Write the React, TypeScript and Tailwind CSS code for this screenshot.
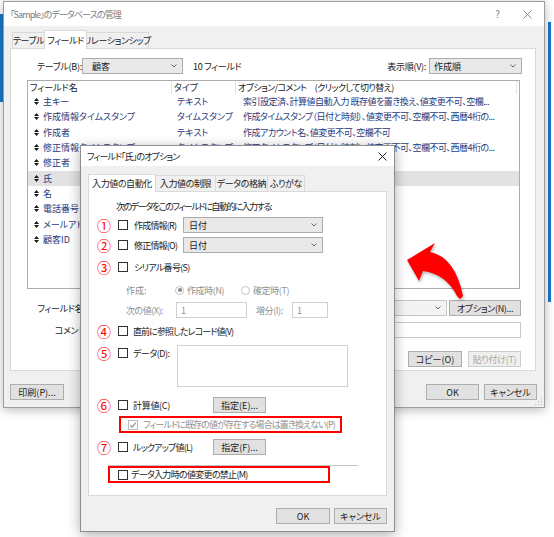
import React from 'react';

type WithClass = { className?: string; children?: React.ReactNode };

const Chevron = () => (
  <svg width="6" height="4" viewBox="0 0 6 4" className="shrink-0">
    <path d="M0.5 0.5 L3 3 L5.5 0.5" fill="none" stroke="#6a6a6a" strokeWidth="1" />
  </svg>
);

const CloseGlyph = ({ color }: { color: string }) => (
  <svg width="9" height="9" viewBox="0 0 9 9" className="shrink-0">
    <path d="M0.5 0.5 L8.5 8.5 M8.5 0.5 L0.5 8.5" stroke={color} strokeWidth="1" />
  </svg>
);

const Btn = ({ className = '', children, disabled }: WithClass & { disabled?: boolean }) => (
  <div
    className={`flex h-[16px] shrink-0 items-center justify-center border ${
      disabled ? 'border-[#cccccc] bg-[#efefef] text-[#a6a6a6]' : 'border-[#adadad] bg-[#e1e1e1] text-[#1a1a1a]'
    } ${className}`}
  >
    {children}
  </div>
);

const Select = ({ className = '', children }: WithClass) => (
  <div
    className={`flex h-[16px] shrink-0 items-center justify-between border border-[#adadad] bg-[#e9e9e9] pr-[5px] ${className}`}
  >
    <span>{children}</span>
    <Chevron />
  </div>
);

const Check = ({ checked, disabled }: { checked?: boolean; disabled?: boolean }) => (
  <span
    className={`relative block h-[10px] w-[10px] shrink-0 border bg-white ${
      disabled ? 'border-[#bcbcbc]' : 'border-[#333333]'
    }`}
  >
    {checked && (
      <svg width="8" height="8" viewBox="0 0 8 8" className="absolute left-0 top-0">
        <path d="M1.2 4.2 L3.2 6.2 L6.8 1.6" fill="none" stroke="#9a9a9a" strokeWidth="1.3" />
      </svg>
    )}
  </span>
);

const Radio = ({ on }: { on?: boolean }) => (
  <span className="flex h-[9px] w-[9px] shrink-0 items-center justify-center rounded-full border border-[#c4c4c4] bg-white">
    {on && <span className="block h-[4px] w-[4px] rounded-full bg-[#8a8a8a]" />}
  </span>
);

const Num = ({ children }: WithClass) => (
  <span className="flex w-[14px] shrink-0 justify-center text-[14px] leading-none text-[#ff0000]">{children}</span>
);

const Grabber = () => (
  <svg width="5" height="7" viewBox="0 0 5 7" className="shrink-0">
    <path d="M2.5 0 L5 3 L0 3 Z M2.5 7 L5 4 L0 4 Z" fill="#1a1a1a" />
  </svg>
);

// name, type, options/comment (the lower rows sit under the options window)
const fields: [string, string, string][] = [
  ['主キー', 'テキスト', '索引設定済、計算値自動入力 既存値を置き換え、値変更不可、空欄...'],
  ['作成情報タイムスタンプ', 'タイムスタンプ', '作成タイムスタンプ（日付と時刻）、値変更不可、空欄不可、西暦4桁の...'],
  ['作成者', 'テキスト', '作成アカウント名、値変更不可、空欄不可'],
  ['修正情報タイムスタンプ', 'タイムスタンプ', '修正タイムスタンプ（日付と時刻）、値変更不可、空欄不可、西暦4桁の...'],
  ['修正者', '', ''],
  ['氏', '', ''],
  ['名', '', ''],
  ['電話番号', '', ''],
  ['メールアドレス', '', ''],
  ['顧客ID', '', ''],
];

const tabOff =
  '-ml-px flex h-[16px] items-center justify-center border border-b-0 border-[#d9d9d9] bg-[#f0f0f0] tracking-[-0.4px]';
const tabOn =
  'relative z-10 -mb-px flex items-center justify-center border border-b-0 border-[#d9d9d9] bg-white tracking-[-0.4px]';

function DatabaseDialog() {
  return (
    <div className="absolute left-[3px] top-[1px] flex h-[407px] w-[542px] flex-col border border-[#9d9d9d] bg-[#f0f0f0] shadow-[0_2px_10px_rgba(0,0,0,0.28)]">
      {/* title bar */}
      <div className="flex h-[24px] shrink-0 items-center bg-white pl-[6px] pr-[12px] text-[#7c7c7c]">
        <span className="tracking-[-0.9px]">「Sample」のデータベースの管理</span>
        <span className="ml-auto mr-[23px] text-[10px]">?</span>
        <CloseGlyph color="#8a8a8a" />
      </div>

      {/* tabs */}
      <div className="flex h-[22px] shrink-0 items-end pl-[9px]">
        <div className={`${tabOff} w-[33px]`}>テーブル</div>
        <div className={`${tabOn} -ml-px h-[19px] w-[43px]`}>フィールド</div>
        <div className={`${tabOff} w-[63px]`}>リレーションシップ</div>
      </div>

      {/* fields panel */}
      <div className="ml-[6px] flex h-[323px] w-[526px] shrink-0 flex-col border border-[#d9d9d9] bg-white">
        <div className="mt-[9px] flex h-[16px] items-center pl-[26px] pr-[13px]">
          <span className="w-[45px] shrink-0 tracking-[-0.3px]">テーブル(B):</span>
          <Select className="w-[101px] pl-[9px]">顧客</Select>
          <span className="ml-[10px] tracking-[-0.3px]">10 フィールド</span>
          <span className="ml-auto tracking-[-0.3px]">表示順(V):</span>
          <Select className="ml-[3px] w-[93px] pl-[4px]">作成順</Select>
        </div>

        {/* field list */}
        <div className="ml-[16px] mt-[6px] flex h-[209px] w-[493px] flex-col overflow-hidden border border-[#acacac] bg-white">
          <div className="flex h-[13px] shrink-0 items-center">
            <div className="flex h-full w-[144px] items-center border-r border-[#e3e3e3] pl-[2px]">フィールド名</div>
            <div className="flex h-full w-[64px] items-center border-r border-[#e3e3e3] pl-[2px]">タイプ</div>
            <div className="flex h-full w-[281px] items-center border-r border-[#e3e3e3] pl-[2px] tracking-[-0.6px]">
              オプション/コメント　(クリックして切り替え)
            </div>
          </div>
          {fields.map(([name, type, opt]) => (
            <div
              key={name}
              className={`flex h-[15.33px] shrink-0 items-center text-[#27397d] ${name === '氏' ? 'bg-[#e2e2e2]' : ''}`}
            >
              <div className="flex w-[144px] items-center gap-[4px] pl-[6px]">
                <Grabber />
                <span>{name}</span>
              </div>
              <div className="w-[65px] pl-[5px]">{type}</div>
              <div className="pl-[6px] tracking-[-0.5px]">{opt}</div>
            </div>
          ))}
        </div>

        <div className="mt-[11px] flex h-[16px] items-center pr-[14px]">
          <span className="w-[87px] shrink-0 text-right tracking-[-0.3px]">フィールド名(M):</span>
          <div className="ml-[4px] h-full flex-1 border border-[#b5b5b5] bg-white" />
          <Select className="ml-[6px] w-[106px] !border-[#c6c6c6] !bg-[#f3f3f3] pl-[4px]">{''}</Select>
          <Btn className="ml-[2px] w-[72px] tracking-[-0.3px]">オプション(N)...</Btn>
        </div>

        <div className="mt-[6px] flex h-[16px] items-center pr-[14px]">
          <span className="w-[87px] shrink-0 text-right tracking-[-0.3px]">コメント(C):</span>
          <div className="ml-[4px] h-full flex-1 border border-[#c9c9c9] bg-white" />
        </div>

        <div className="mt-[13px] flex h-[16px] items-center justify-end gap-[6px] pr-[14px]">
          <Btn className="w-[54px]">コピー(O)</Btn>
          <Btn className="w-[53px] tracking-[-0.3px]" disabled>
            貼り付け(T)
          </Btn>
        </div>
      </div>

      {/* footer */}
      <div className="mt-[13px] flex h-[16px] items-center pl-[6px] pr-[7px]">
        <Btn className="w-[54px]">印刷(P)...</Btn>
        <Btn className="ml-auto w-[53px]">OK</Btn>
        <Btn className="ml-[5px] w-[53px]">キャンセル</Btn>
      </div>

      {/* size grip */}
      <svg width="8" height="8" viewBox="0 0 8 8" className="absolute bottom-[1px] right-[1px]">
        <g fill="#bdbdbd">
          <rect x="6" y="0" width="1.2" height="1.2" />
          <rect x="3" y="3" width="1.2" height="1.2" />
          <rect x="6" y="3" width="1.2" height="1.2" />
          <rect x="0" y="6" width="1.2" height="1.2" />
          <rect x="3" y="6" width="1.2" height="1.2" />
          <rect x="6" y="6" width="1.2" height="1.2" />
        </g>
      </svg>
    </div>
  );
}

function FieldOptionsDialog() {
  return (
    <div className="absolute left-[80px] top-[145px] flex h-[387px] w-[315px] flex-col border border-[#8e8e8e] bg-[#f0f0f0] shadow-[0_3px_12px_rgba(0,0,0,0.32)]">
      <div className="flex h-[20px] shrink-0 items-center bg-white pl-[6px] pr-[7px]">
        <span className="tracking-[-0.9px]">フィールド「氏」のオプション</span>
        <span className="ml-auto">
          <CloseGlyph color="#222222" />
        </span>
      </div>

      <div className="flex h-[25px] shrink-0 items-end pl-[7px]">
        <div className={`${tabOn} h-[18px] w-[68px]`}>入力値の自動化</div>
        <div className={`${tabOff} w-[61px]`}>入力値の制限</div>
        <div className={`${tabOff} w-[53px]`}>データの格納</div>
        <div className={`${tabOff} w-[38px]`}>ふりがな</div>
      </div>

      <div className="ml-[7px] flex h-[305px] w-[299px] shrink-0 flex-col border border-[#d9d9d9] bg-white">
        <div className="mt-[8px] flex h-[13px] items-center pl-[27px] tracking-[-1.4px]">
          次のデータをこのフィールドに自動的に入力する:
        </div>

        <div className="mt-[4px] flex h-[16px] items-center pl-[8px]">
          <Num>①</Num>
          <span className="ml-[7px]"><Check /></span>
          <span className="ml-[6px] w-[49px] shrink-0 tracking-[-0.8px]">作成情報(R)</span>
          <Select className="w-[140px] pl-[5px]">日付</Select>
        </div>

        <div className="mt-[4px] flex h-[16px] items-center pl-[8px]">
          <Num>②</Num>
          <span className="ml-[7px]"><Check /></span>
          <span className="ml-[6px] w-[49px] shrink-0 tracking-[-0.8px]">修正情報(O)</span>
          <Select className="w-[140px] pl-[5px]">日付</Select>
        </div>

        <div className="mt-[6px] flex h-[16px] items-center pl-[8px]">
          <Num>③</Num>
          <span className="ml-[7px]"><Check /></span>
          <span className="ml-[6px] tracking-[-0.7px]">シリアル番号(S)</span>
        </div>

        <div className="mt-[8px] flex h-[14px] items-center pl-[37px] text-[#8f8f8f]">
          <span className="w-[49px] shrink-0">作成:</span>
          <div className="flex w-[66px] shrink-0 items-center gap-[3px]">
            <Radio on />
            <span className="tracking-[-0.4px]">作成時(N)</span>
          </div>
          <div className="flex items-center gap-[3px]">
            <Radio />
            <span className="tracking-[-0.4px]">確定時(T)</span>
          </div>
        </div>

        <div className="mt-[5px] flex h-[16px] items-center pl-[37px] text-[#8f8f8f]">
          <span className="w-[50px] shrink-0 tracking-[-0.5px]">次の値(X):</span>
          <div className="flex h-full w-[71px] items-center border border-[#cfcfcf] pl-[4px]">1</div>
          <span className="ml-[9px] w-[36px] shrink-0 tracking-[-0.4px]">増分(I):</span>
          <div className="flex h-full w-[36px] items-center border border-[#cfcfcf] pl-[4px]">1</div>
        </div>

        <div className="mt-[5px] flex h-[16px] items-center pl-[8px]">
          <Num>④</Num>
          <span className="ml-[7px]"><Check /></span>
          <span className="ml-[5px] tracking-[-0.9px]">直前に参照したレコード値(V)</span>
        </div>

        <div className="mt-[6px] flex h-[42px] items-start pl-[8px]">
          <div className="flex h-[16px] items-center">
            <Num>⑤</Num>
            <span className="ml-[7px]"><Check /></span>
            <span className="ml-[5px] w-[44px] shrink-0 tracking-[-0.5px]">データ(D):</span>
          </div>
          <div className="h-[42px] w-[171px] border border-[#cfcfcf] bg-white" />
        </div>

        <div className="mt-[10px] flex h-[16px] items-center pl-[8px]">
          <Num>⑥</Num>
          <span className="ml-[7px]"><Check /></span>
          <span className="ml-[5px] w-[80px] shrink-0 tracking-[-0.3px]">計算値(C)</span>
          <Btn className="w-[53px]">指定(E)...</Btn>
        </div>

        <div className="ml-[30px] mt-[3px] flex h-[17px] w-[223px] items-center border-2 border-[#ff0000] pl-[7px] text-[#8f8f8f]">
          <Check checked disabled />
          <span className="ml-[5px] tracking-[-0.9px]">フィールドに既存の値が存在する場合は置き換えない(P)</span>
        </div>

        <div className="mt-[6px] flex h-[16px] items-center pl-[8px]">
          <Num>⑦</Num>
          <span className="ml-[7px]"><Check /></span>
          <span className="ml-[5px] w-[80px] shrink-0 tracking-[-0.8px]">ルックアップ値(L)</span>
          <Btn className="w-[53px]">指定(F)...</Btn>
        </div>

        <div className="ml-[19px] mt-[10px] h-px w-[250px] bg-[#c4c4c4]" />

        <div className="ml-[19px] flex h-[17px] w-[222px] items-center border-2 border-[#ff0000] pl-[8px]">
          <Check />
          <span className="ml-[3px] tracking-[-0.7px]">データ入力時の値変更の禁止(M)</span>
        </div>
      </div>

      <div className="mt-[12px] flex h-[16px] items-center justify-end gap-[4px] pr-[7px]">
        <Btn className="w-[54px]">OK</Btn>
        <Btn className="w-[53px]">キャンセル</Btn>
      </div>
    </div>
  );
}

const CurvedArrow = () => (
  <svg
    width="70"
    height="64"
    viewBox="0 0 70 64"
    className="absolute left-[400px] top-[240px] drop-shadow-[1px_2px_1.5px_rgba(0,0,0,0.28)]"
  >
    <path d="M7 20 L35 3 L30 12 Q55 17 63 56 L60 59 L57 56 Q46 34 23 31 L19 41 Z" fill="#ff0000" />
  </svg>
);

export default function App() {
  return (
    <div className="relative h-[537px] w-[554px] overflow-hidden whitespace-nowrap bg-white font-['Noto_Sans_CJK_JP','Noto_Sans',sans-serif] text-[9px] leading-none text-[#1a1a1a] [font-feature-settings:'palt']">
      {/* edges of other windows behind */}
      <div className="absolute left-0 top-[14px] h-[88px] w-[3px] bg-[#1979ca]" />
      <div className="absolute left-[548px] top-[22px] h-[280px] w-[3px] bg-[#1979ca]" />
      <DatabaseDialog />
      <FieldOptionsDialog />
      <CurvedArrow />
    </div>
  );
}
